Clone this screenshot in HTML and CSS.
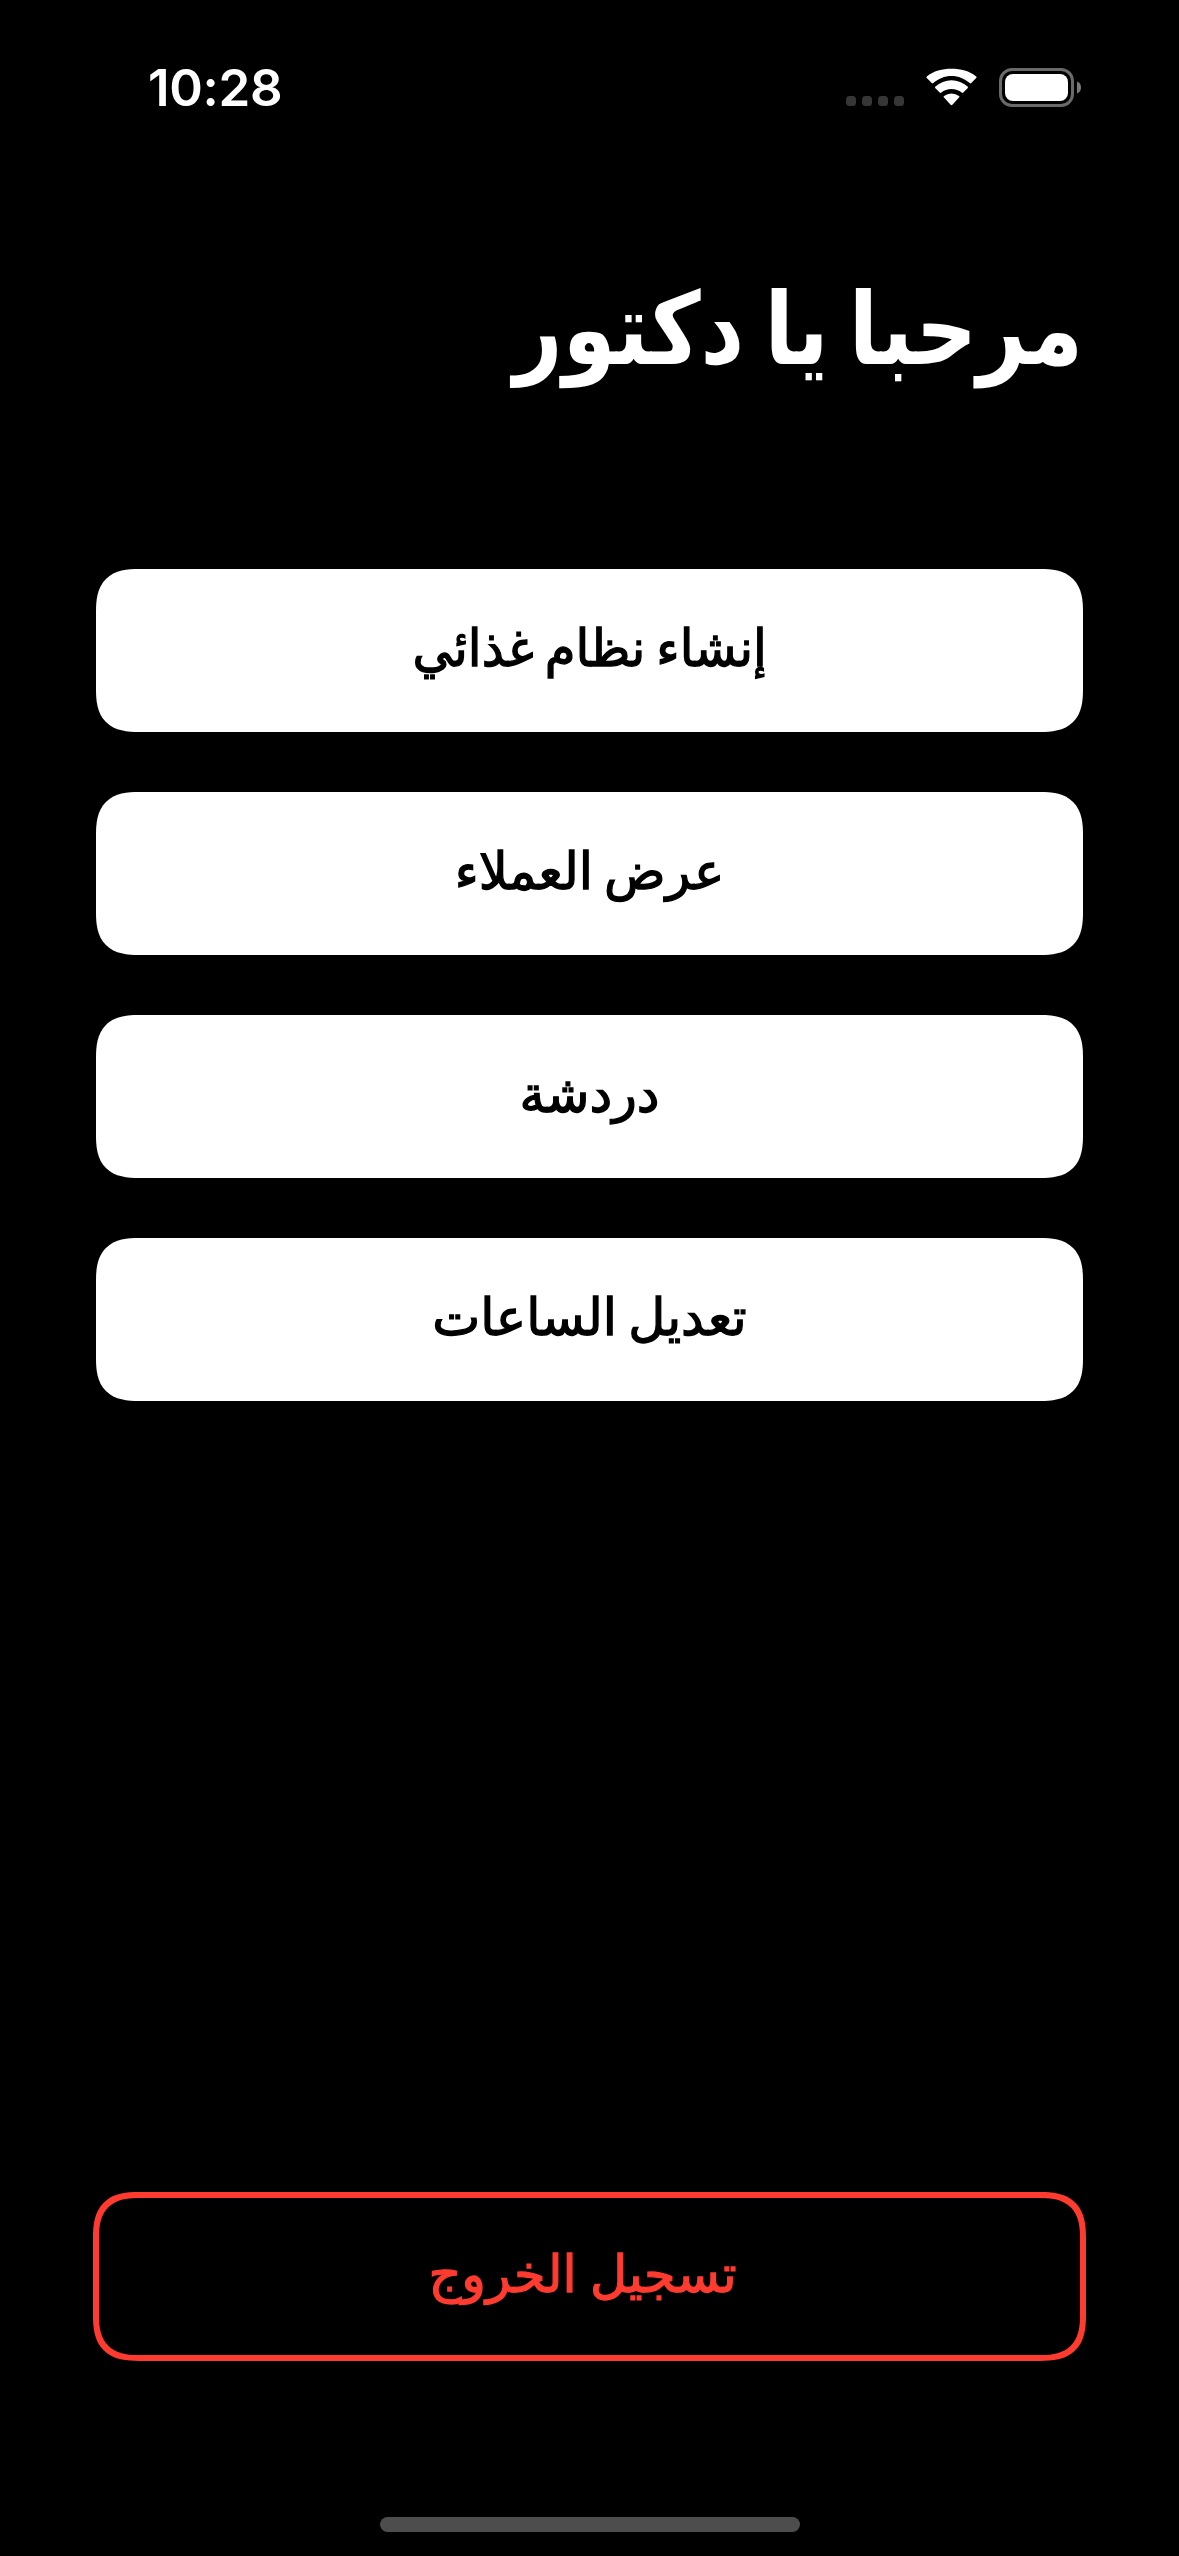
FILE: index.html
```html
<!DOCTYPE html>
<html lang="ar">
<head>
<meta charset="utf-8">
<title>مرحبا يا دكتور</title>
<link rel="stylesheet" href="styles.css">
</head>
<body>
<div class="screen">
  <header class="status">
    <span class="time">10:28</span>
    <div class="indicators">
      <svg class="cell" width="60" height="12" viewBox="0 0 60 12"><g fill="#363636"><rect x="0" y="1" width="10" height="10" rx="3.5"/><rect x="16" y="1" width="10" height="10" rx="3.5"/><rect x="32" y="1" width="10" height="10" rx="3.5"/><rect x="48" y="1" width="10" height="10" rx="3.5"/></g></svg>
      <svg class="wifi" width="51" height="38" viewBox="0 0 51 38"><g fill="#fff"><path d="M25.500 8c7 0 13.300 2.700 18.200 7.100.5.500 1.100.5 1.600 0l4.900-5c.5-.5.5-1.200 0-1.700C43.500 3 34.800.8 25.500.8S7.500 3 .8 8.400c-.5.500-.5 1.200 0 1.700l4.900 5c.5.5 1.100.5 1.600 0C12.200 10.700 18.500 8 25.500 8z"/><path d="M25.500 21c3.900 0 7.500 1.300 10.200 3.500.5.500 1.100.5 1.600 0l4.300-4.300c.5-.5.5-1.200 0-1.700a24 24 0 0 0-32.200 0c-.5.500-.5 1.200 0 1.700l4.300 4.300c.5.5 1.100.5 1.600 0C18 22.300 21.600 21 25.500 21z"/><path d="M33 29.600c.5-.5.5-1.300 0-1.700a12.500 12.500 0 0 0-15 0c-.5.400-.5 1.200 0 1.700l6.600 7.200c.5.500 1.300.5 1.800 0z"/></g></svg>
      <svg class="battery" width="84" height="40" viewBox="0 0 84 40"><rect x="1.500" y="1.500" width="72" height="36" rx="11.500" fill="none" stroke="#6a6a6a" stroke-width="3"/><rect x="6" y="6" width="63" height="27" rx="8" fill="#fff"/><path d="M78 13.500c2.800 1 4 3.300 4 6s-1.200 5-4 6z" fill="#7a7a7a"/></svg>
    </div>
  </header>
  <h1 class="title" dir="rtl">مرحبا يا دكتور</h1>
  <main class="menu">
    <button class="button" dir="rtl"><span class="label label-narrow">إنشاء نظام غذائي</span></button>
    <button class="button" dir="rtl"><span class="label">عرض العملاء</span></button>
    <button class="button" dir="rtl"><span class="label">دردشة</span></button>
    <button class="button" dir="rtl"><span class="label">تعديل الساعات</span></button>
  </main>
  <button class="button logout" dir="rtl"><span class="label">تسجيل الخروج</span></button>
  <div class="home"></div>
</div>
</body>
</html>
```
FILE: styles.css
```css
* { box-sizing: border-box; }
body { margin: 0; background: #000; color: #fff; font-family: Inter, "Noto Sans", "DejaVu Sans", sans-serif; }
.screen { width: 1179px; height: 2556px; display: flex; flex-direction: column; padding: 0 96px; }
.status { height: 176px; padding-left: 52px; display: flex; justify-content: space-between; }
.time { font-size: 51px; font-weight: 560; line-height: 62px; margin-top: 57px; letter-spacing: -0.3px; }
.indicators { display: flex; align-items: flex-start; height: 40px; margin-top: 68px; }
.cell { margin-top: 27px; margin-right: 20px; }
.wifi { margin-right: 22px; }
.title { margin: 72px 0 0; height: 321px; font-size: 100px; line-height: 160px; font-weight: 700; transform: scaleX(0.853); transform-origin: right; }
.menu { display: flex; flex-direction: column; gap: 60px; }
.button { display: flex; align-items: center; justify-content: center; width: 987px; height: 163px; border: 0; border-radius: 34px; background: #fff; color: #000; font: 500 51px "Noto Sans", "DejaVu Sans", sans-serif; padding: 0 0 9px; }
.label { -webkit-text-stroke: 1.3px currentColor; word-spacing: -2px; }
.label-narrow { transform: scaleX(0.975); }
.logout { margin: auto -3px 156px; width: 993px; height: 169px; flex: none; background: #000; color: #ff3b30; border: 6px solid #ff3b30; padding: 0 0 9px; }
.logout .label { margin-right: 14px; word-spacing: 0; }
.home { flex: none; width: 420px; height: 15px; border-radius: 8px; background: #4d4d4d; align-self: center; margin-bottom: 24px; }
@supports (corner-shape: superellipse(1.4)) {
  .button { border-radius: 43px; corner-shape: superellipse(1.4); }
  .logout { border-radius: 46px; }
}
```
